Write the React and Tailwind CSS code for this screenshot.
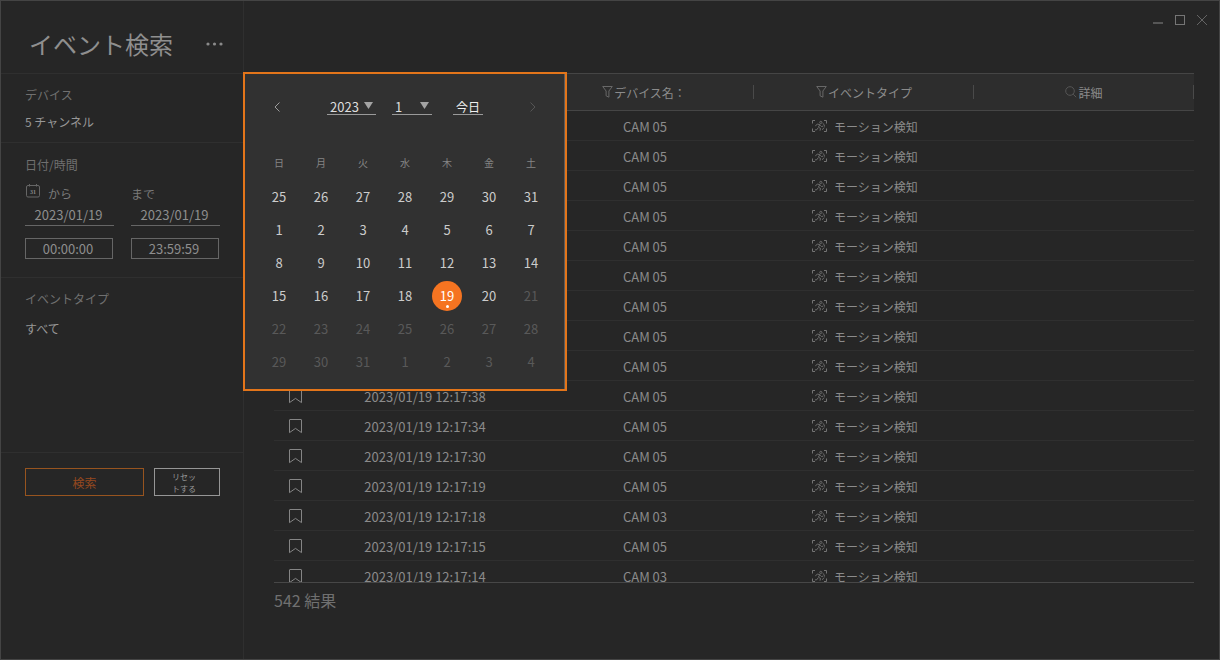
const EVENT_TYPE = 'モーション検知';

const EVENTS = [
  ['', 'CAM 05'],
  ['', 'CAM 05'],
  ['', 'CAM 05'],
  ['', 'CAM 05'],
  ['', 'CAM 05'],
  ['', 'CAM 05'],
  ['', 'CAM 05'],
  ['', 'CAM 05'],
  ['', 'CAM 05'],
  ['2023/01/19 12:17:38', 'CAM 05'],
  ['2023/01/19 12:17:34', 'CAM 05'],
  ['2023/01/19 12:17:30', 'CAM 05'],
  ['2023/01/19 12:17:19', 'CAM 05'],
  ['2023/01/19 12:17:18', 'CAM 03'],
  ['2023/01/19 12:17:15', 'CAM 05'],
  ['2023/01/19 12:17:14', 'CAM 03'],
];

const WEEKDAYS = ['日', '月', '火', '水', '木', '金', '土'];

const WEEKS = [
  [25, 26, 27, 28, 29, 30, 31],
  [1, 2, 3, 4, 5, 6, 7],
  [8, 9, 10, 11, 12, 13, 14],
  [15, 16, 17, 18, 19, 20, 21],
  [22, 23, 24, 25, 26, 27, 28],
  [29, 30, 31, 1, 2, 3, 4],
];

function FunnelIcon() {
  return (
    <svg width="11" height="12" viewBox="0 0 11 12" fill="none" stroke="#686868" aria-hidden="true">
      <path d="M.7.5h9.6L6.9 5v6.2L4.1 9.8V5z" />
    </svg>
  );
}

function SearchIcon() {
  return (
    <svg width="12" height="12" viewBox="0 0 12 12" fill="none" stroke="#555555" aria-hidden="true">
      <circle cx="5" cy="5" r="4.3" />
      <path d="M8.2 8.2l3 3" />
    </svg>
  );
}

function BookmarkIcon() {
  return (
    <svg width="13" height="15" viewBox="0 0 13 15" fill="none" stroke="#858585" aria-hidden="true">
      <path d="M.5 13.6V1Q.5.5 1 .5h11q.5 0 .5.5v12.6L6.5 9.4z" />
    </svg>
  );
}

function MotionIcon() {
  return (
    <svg width="15" height="14" viewBox="0 0 15 14" fill="none" stroke="#747474" aria-hidden="true">
      <path d="M.5 3.500v-3H3M12 .5h2.500v3M14.500 8.500v3H12M3 11.500H.5v-3" />
      <circle cx="8.800" cy="2.400" r="1.100" strokeWidth=".8" />
      <path
        d="M3.300 5.800l2.100-1.600 2.500.3-1.500 2.700 2.100 1.200-.5 2.300M6.100 7.900L4.900 9.700l-2 .2M8.200 5.300l1.300 1.200 1.600-.3M10.700 3.300q2 .9 1.700 3.300M10 9.600q1.700-.7 2.100-2"
        strokeWidth=".9"
      />
    </svg>
  );
}

function CalendarIcon() {
  return (
    <svg width="14" height="14" viewBox="0 0 14 14" fill="none" stroke="#666666" aria-hidden="true">
      <rect x=".5" y="1.500" width="13" height="11.500" rx="1.500" />
      <path d="M3.500 0v2.500M10.500 0v2.500" />
      <text
        x="7"
        y="9.500"
        textAnchor="middle"
        fontSize="6"
        fontWeight="700"
        fill="#8a8a8a"
        stroke="none"
        fontFamily="Liberation Serif, serif"
      >
        31
      </text>
    </svg>
  );
}

function WindowControls() {
  return (
    <div className="flex gap-3">
      <button type="button" aria-label="最小化">
        <svg width="10" height="10" viewBox="0 0 10 10" aria-hidden="true">
          <path d="M0 8h10" stroke="#565656" strokeWidth="2" />
        </svg>
      </button>
      <button type="button" aria-label="最大化">
        <svg width="10" height="10" viewBox="0 0 10 10" fill="none" aria-hidden="true">
          <rect x=".5" y=".5" width="9" height="9" stroke="#757575" />
        </svg>
      </button>
      <button type="button" aria-label="閉じる">
        <svg width="10" height="10" viewBox="0 0 10 10" aria-hidden="true">
          <path d="M0 0l10 10M10 0L0 10" stroke="#757575" strokeWidth=".8" />
        </svg>
      </button>
    </div>
  );
}

function DateTimeField({ id, label, icon, date, time }) {
  return (
    <div className="flex min-w-0 flex-col">
      <div className="flex h-5 items-start gap-2">
        {icon}
        <label htmlFor={id} className="pt-0.5 text-[#7a7a7a]">
          {label}
        </label>
      </div>
      <input
        id={id}
        defaultValue={date}
        className="h-[22px] w-full border-b border-[#666666] pr-0.5 text-center text-[13px] text-[#8e8e8e] outline-none"
      />
      <input
        aria-label={label + '時刻'}
        defaultValue={time}
        className="mt-3 h-[21px] w-[88px] border border-[#666666] pr-0.5 text-center text-[13px] text-[#8e8e8e] outline-none"
      />
    </div>
  );
}

function Sidebar() {
  return (
    <aside className="flex w-[243px] shrink-0 flex-col border-r border-[#2f2f2f] leading-4">
      <header className="flex h-[73px] items-center justify-between border-b border-[#2f2f2f] pt-[13px] pr-5 pl-7">
        <h1 className="text-2xl leading-7 text-[#8f8f8f]">イベント検索</h1>
        <button type="button" aria-label="メニュー">
          <svg width="17" height="4" viewBox="0 0 17 4" fill="#8a8a8a" aria-hidden="true">
            <circle cx="2" cy="2" r="1.600" />
            <circle cx="8.500" cy="2" r="1.600" />
            <circle cx="15" cy="2" r="1.600" />
          </svg>
        </button>
      </header>

      <section className="flex h-[69px] flex-col gap-[11px] border-b border-[#2f2f2f] px-6 pt-[13px]">
        <h2 className="text-[#707070]">デバイス</h2>
        <p className="text-[#979797]">5 チャンネル</p>
      </section>

      <section className="border-b border-[#2f2f2f] pt-[14px] pr-[23px] pb-[18px] pl-6">
        <h2 className="text-[#707070]">日付/時間</h2>
        <div className="mt-[11px] grid grid-cols-2 gap-[17px]">
          <DateTimeField
            id="from"
            label="から"
            icon={
              <span className="pl-px">
                <CalendarIcon />
              </span>
            }
            date="2023/01/19"
            time="00:00:00"
          />
          <DateTimeField id="to" label="まで" date="2023/01/19" time="23:59:59" />
        </div>
      </section>

      <section className="flex h-[175px] flex-col gap-[14px] border-b border-[#2f2f2f] px-6 pt-[13px]">
        <h2 className="text-[#707070]">イベントタイプ</h2>
        <p className="text-[#979797]">すべて</p>
      </section>

      <div className="flex gap-[10px] pt-[15px] pr-[23px] pl-6">
        <button type="button" className="h-7 flex-1 border border-[#97541f] pt-0.5 text-[#96491f]">
          検索
        </button>
        <button
          type="button"
          className="h-7 w-[66px] border border-[#969696] pt-0.5 pr-[22px] pl-4 text-[8px] leading-3 text-[#969696]"
        >
          リセットする
        </button>
      </div>
    </aside>
  );
}

function HeaderCell({ icon, children }) {
  return (
    <th className="p-0 font-normal">
      <div className="flex h-[14px] items-center justify-center gap-px border-r border-[#4a4a4a] pl-px">
        {icon}
        <span className="pt-0.5">{children}</span>
      </div>
    </th>
  );
}

function Results() {
  return (
    <main className="flex min-w-0 flex-1 flex-col">
      <div className="flex h-[72px] shrink-0 justify-end pt-[14px] pr-3">
        <div>
          <WindowControls />
        </div>
      </div>
      <div className="mr-[25px] ml-[30px] min-h-0 flex-1 overflow-hidden border-b border-[#474747]">
        <table className="w-full table-fixed border-separate border-spacing-0">
          <thead>
            <tr className="h-[38px] bg-[#2d2d2d] text-[#8b8b8b] [&>th]:border-y [&>th]:border-[#454545]">
              <th className="w-10 p-0" aria-label="ブックマーク" />
              <th className="p-0" aria-label="日付/時間" />
              <HeaderCell icon={<FunnelIcon />}>デバイス名：</HeaderCell>
              <HeaderCell icon={<FunnelIcon />}>イベントタイプ</HeaderCell>
              <HeaderCell icon={<SearchIcon />}>詳細</HeaderCell>
            </tr>
          </thead>
          <tbody>
            {EVENTS.map(([time, camera], index) => (
              <tr
                key={index}
                className="h-[30px] text-center text-[#8b8b8b] [&>td]:border-b [&>td]:border-[#2f2f2f] [&>td]:p-0 [&>td]:pt-0.5 [&>td]:pl-0.5"
              >
                <td>
                  <button type="button" aria-label="ブックマーク" className="block w-full">
                    <span className="flex justify-center">
                      <BookmarkIcon />
                    </span>
                  </button>
                </td>
                <td className="text-[13px]">{time}</td>
                <td className="text-[13px]">{camera}</td>
                <td>
                  <span className="flex items-center justify-center gap-[7px]">
                    <MotionIcon />
                    {EVENT_TYPE}
                  </span>
                </td>
                <td />
              </tr>
            ))}
          </tbody>
        </table>
      </div>
      <p className="ml-[30px] h-[76px] shrink-0 pt-[5px] text-base text-[#707070]">542 結果</p>
    </main>
  );
}

function Dropdown({ label, value, className }) {
  return (
    <span className={'relative flex h-[18px] items-center border-b border-[#9a9a9a] pt-0.5 ' + className}>
      <select
        aria-label={label}
        defaultValue={value}
        className="w-full appearance-none bg-transparent pl-[3px] text-[13px] leading-4 text-[#dedede] outline-none"
      >
        <option>{value}</option>
      </select>
      <svg
        width="9"
        height="7"
        viewBox="0 0 9 7"
        fill="#a3a3a3"
        className="pointer-events-none absolute top-[5px] right-[3px]"
        aria-hidden="true"
      >
        <path d="M0 0h9L4.500 7z" />
      </svg>
    </span>
  );
}

function dayClass(week, day) {
  if (week === 3 && day === 19) {
    return 'relative flex size-[30px] items-center justify-center rounded-full bg-[#f57421] text-white';
  }
  const disabled = week > 3 || (week === 3 && day > 20);
  return disabled ? 'text-[#595959]' : 'text-[#cccccc]';
}

function CalendarPopup() {
  return (
    <div className="absolute top-[71px] left-[242px] z-10 border-2 border-[#e3751a] bg-[#313131]">
      <div className="border-r border-[#5c5c5c] pr-3 pb-[11px] pl-[13px]">
        <div className="flex h-[71px] items-center pr-4 pb-[6px] pl-4">
          <button type="button" aria-label="前の月">
            <svg width="6" height="10" viewBox="0 0 6 10" fill="none" stroke="#a8a8a8" aria-hidden="true">
              <path d="M5.500.5L1 5l4.500 4.500" strokeWidth=".9" />
            </svg>
          </button>
          <div className="flex flex-1 items-center justify-center pb-px">
            <Dropdown label="年" value="2023" className="w-[49px]" />
            <Dropdown label="月" value="1" className="ml-4 w-10" />
            <button
              type="button"
              className="ml-[21px] h-[18px] border-b border-[#9a9a9a] px-[3px] pt-0.5 leading-4 text-[#f0f0f0]"
            >
              今日
            </button>
          </div>
          <button type="button" aria-label="次の月">
            <svg width="6" height="10" viewBox="0 0 6 10" fill="none" stroke="#555555" aria-hidden="true">
              <path d="M.5.5L5 5 .5 9.500" />
            </svg>
          </button>
        </div>
        <table className="table-fixed border-collapse text-center">
          <thead>
            <tr className="h-[35px] text-[10px] text-[#858585]">
              {WEEKDAYS.map((name) => (
                <th key={name} className="w-[42px] p-0 font-normal">
                  {name}
                </th>
              ))}
            </tr>
          </thead>
          <tbody className="text-[13px]">
            {WEEKS.map((days, week) => (
              <tr key={week} className="h-[33px]">
                {days.map((day) => (
                  <td key={day} className="p-0">
                    <span className="flex justify-center">
                      <button type="button" className={dayClass(week, day)}>
                        {day}
                        {week === 3 && day === 19 && (
                          <span className="absolute bottom-[3px] size-[3px] rounded-full bg-white" />
                        )}
                      </button>
                    </span>
                  </td>
                ))}
              </tr>
            ))}
          </tbody>
        </table>
      </div>
    </div>
  );
}

export default function App() {
  return (
    <div
      lang="ja"
      className="relative flex h-screen border border-[#444444] bg-[#262626] font-['Noto_Sans_CJK_JP',sans-serif] text-xs"
    >
      <Sidebar />
      <Results />
      <CalendarPopup />
    </div>
  );
}
